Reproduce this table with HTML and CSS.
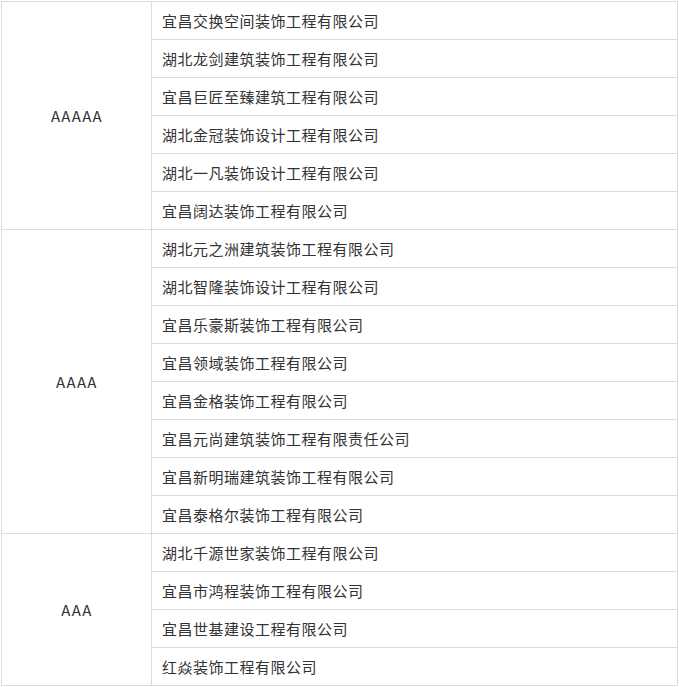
FILE: index.html
```html
<!DOCTYPE html>
<html lang="zh">
<head>
<meta charset="utf-8">
<link rel="stylesheet" href="styles.css">
</head>
<body>
<table class="grade-table">
  <tbody>
    <tr><td class="grade" rowspan="6">AAAAA</td><td class="company">宜昌交换空间装饰工程有限公司</td></tr>
    <tr><td class="company">湖北龙剑建筑装饰工程有限公司</td></tr>
    <tr><td class="company">宜昌巨匠至臻建筑工程有限公司</td></tr>
    <tr><td class="company">湖北金冠装饰设计工程有限公司</td></tr>
    <tr><td class="company">湖北一凡装饰设计工程有限公司</td></tr>
    <tr><td class="company">宜昌阔达装饰工程有限公司</td></tr>
    <tr><td class="grade" rowspan="8">AAAA</td><td class="company">湖北元之洲建筑装饰工程有限公司</td></tr>
    <tr><td class="company">湖北智隆装饰设计工程有限公司</td></tr>
    <tr><td class="company">宜昌乐豪斯装饰工程有限公司</td></tr>
    <tr><td class="company">宜昌领域装饰工程有限公司</td></tr>
    <tr><td class="company">宜昌金格装饰工程有限公司</td></tr>
    <tr><td class="company">宜昌元尚建筑装饰工程有限责任公司</td></tr>
    <tr><td class="company">宜昌新明瑞建筑装饰工程有限公司</td></tr>
    <tr><td class="company">宜昌泰格尔装饰工程有限公司</td></tr>
    <tr><td class="grade" rowspan="4">AAA</td><td class="company">湖北千源世家装饰工程有限公司</td></tr>
    <tr><td class="company">宜昌市鸿程装饰工程有限公司</td></tr>
    <tr><td class="company">宜昌世基建设工程有限公司</td></tr>
    <tr><td class="company">红焱装饰工程有限公司</td></tr>
  </tbody>
</table>
</body>
</html>
```
FILE: styles.css
```css
html, body {
  margin: 0;
  padding: 0;
  background: #fff;
}
body {
  padding: 1px;
  font-family: "Noto Sans CJK SC", "Noto Sans", sans-serif;
  color: #333;
}
.grade-table {
  border-collapse: collapse;
  width: 677px;
  table-layout: fixed;
}
.grade-table td {
  border: 1px solid #dcdcdc;
  height: 38px;
  padding: 0;
  box-sizing: border-box;
  font-size: 15px;
  line-height: 20px;
}
.grade-table td.grade {
  width: 150px;
  text-align: center;
  letter-spacing: 1.4px;
  padding-left: 1px;
}
.grade-table td.company {
  padding-left: 10px;
  letter-spacing: 0.5px;
  text-align: left;
}
```
